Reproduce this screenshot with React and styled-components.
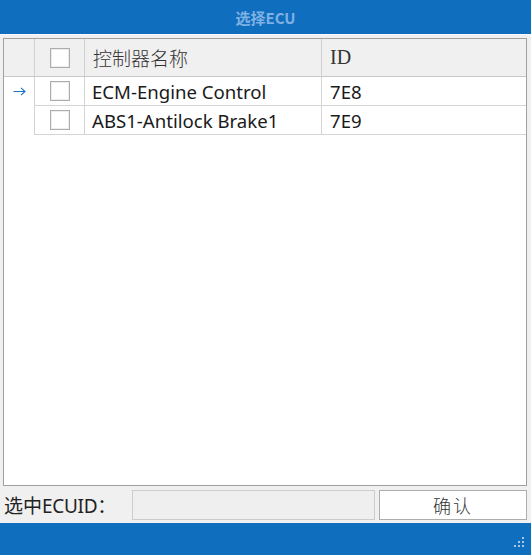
import styled, { createGlobalStyle } from "styled-components";

const GlobalStyle = createGlobalStyle`
  html, body {
    margin: 0;
    padding: 0;
    background: #f0f0f0;
  }
  * {
    box-sizing: border-box;
  }
`;

const Window = styled.div`
  width: 531px;
  height: 555px;
  display: flex;
  flex-direction: column;
  background: #f0f0f0;
  font-family: "Noto Sans", "Noto Sans CJK SC", sans-serif;
  overflow: hidden;
`;

const TitleBar = styled.div`
  height: 35px;
  flex: none;
  background: #106ebe;
  display: flex;
  align-items: center;
  justify-content: center;
  color: #7fb1e3;
  font-family: "Noto Sans CJK SC", sans-serif;
  font-weight: 700;
  font-size: 15px;
  border-bottom: 1px solid #fafafa;
`;

const Body = styled.div`
  flex: 1;
  display: flex;
  flex-direction: column;
  padding: 3px 4px 0 3px;
  min-height: 0;
`;

const Grid = styled.div`
  flex: 1;
  background: #fff;
  border: 1px solid #a0a0a0;
  display: grid;
  grid-template-columns: 31px 50px 237px 1fr;
  grid-template-rows: 38px;
  grid-auto-rows: 29px;
  align-content: start;
`;

const Cell = styled.div`
  display: flex;
  align-items: center;
  padding-left: ${(p) => p.$pad || 0}px;
  justify-content: ${(p) => (p.$center ? "center" : "flex-start")};
  border-right: 1px solid #d4d4d4;
  border-bottom: 1px solid #d4d4d4;
  font-size: 18.6px;
  color: #1a1a1a;
  white-space: nowrap;
  overflow: hidden;
  &:nth-child(4n) {
    border-right: none;
  }
`;

const HeadCell = styled(Cell)`
  background: #f0f0f0;
  font-family: ${(p) => (p.$serif ? '"Liberation Serif", serif' : '"Noto Sans CJK SC", sans-serif')};
  font-size: ${(p) => (p.$serif ? 20 : 19)}px;
  color: #333;
  font-weight: 300;
  border-bottom-color: #c8c8c8;
  border-right-color: #d0d0d0;
`;

const Row = styled.div`
  display: contents;
`;

const RowHead = styled.div`
  display: flex;
  align-items: center;
  justify-content: center;
  border-right: 1px solid #d4d4d4;
  background: #fff;
`;

const Check = styled.span`
  width: 20px;
  height: 20px;
  margin-top: ${(p) => (p.$head ? 1 : 0)}px;
  background: #fff;
  border: 1px solid #adadad;
  box-shadow: inset 0 0 0 1px #ececec;
`;

const Footer = styled.div`
  height: 37px;
  flex: none;
  display: flex;
  align-items: center;
  padding: 0 0 0 1px;
`;

const FooterLabel = styled.span`
  width: 128px;
  font-family: "Noto Sans CJK SC", sans-serif;
  font-size: 19px;
  color: #222;
  margin-top: 1px;
  white-space: nowrap;
`;

const Latin = styled.span`
  font-family: "Noto Sans", sans-serif;
  letter-spacing: -0.3px;
`;

const IdInput = styled.div`
  width: 243px;
  height: 30px;
  border: 1px solid #cccccc;
  background: #efefef;
`;

const ConfirmButton = styled.button`
  margin-left: 4px;
  flex: 1;
  height: 30px;
  background: #fff;
  border: 1px solid #adadad;
  font-family: "Noto Sans CJK SC", sans-serif;
  font-size: 18px;
  font-weight: 300;
  color: #333;
  letter-spacing: 2px;
  padding: 0;
`;

const StatusBar = styled.div`
  height: 32px;
  flex: none;
  background: #106ebe;
  display: flex;
  justify-content: flex-end;
  align-items: flex-end;
  padding: 0 6px 7px 0;
`;

const Arrow = () => (
  <svg width="13" height="9" viewBox="0 0 13 9">
    <path d="M0.5 4.5H12M8 0.8L12 4.5L8 8.2" fill="none" stroke="#1f72c4" strokeWidth="1.1" />
  </svg>
);

const Grip = () => (
  <svg width="12" height="12" viewBox="0 0 12 12">
    {[
      [9, 1],
      [5, 5],
      [9, 5],
      [1, 9],
      [5, 9],
      [9, 9],
    ].map(([x, y], i) => (
      <rect key={i} x={x} y={y} width="2" height="2" fill="#a9c4de" />
    ))}
  </svg>
);

const rows = [
  { name: "ECM-Engine Control", id: "7E8", current: true },
  { name: "ABS1-Antilock Brake1", id: "7E9" },
];

export default function App() {
  return (
    <>
      <GlobalStyle />
      <Window>
        <TitleBar>选择ECU</TitleBar>
        <Body>
          <Grid>
            <Row>
              <HeadCell />
              <HeadCell $center>
                <Check $head />
              </HeadCell>
              <HeadCell $pad={8}>控制器名称</HeadCell>
              <HeadCell $pad={8} $serif>
                ID
              </HeadCell>
            </Row>
            {rows.map((r) => (
              <Row key={r.id}>
                <RowHead>{r.current && <Arrow />}</RowHead>
                <Cell $center>
                  <Check />
                </Cell>
                <Cell $pad={7}>{r.name}</Cell>
                <Cell $pad={8}>{r.id}</Cell>
              </Row>
            ))}
          </Grid>
          <Footer>
            <FooterLabel>
              选中<Latin>ECUID</Latin>：
            </FooterLabel>
            <IdInput />
            <ConfirmButton>确认</ConfirmButton>
          </Footer>
        </Body>
        <StatusBar>
          <Grip />
        </StatusBar>
      </Window>
    </>
  );
}
